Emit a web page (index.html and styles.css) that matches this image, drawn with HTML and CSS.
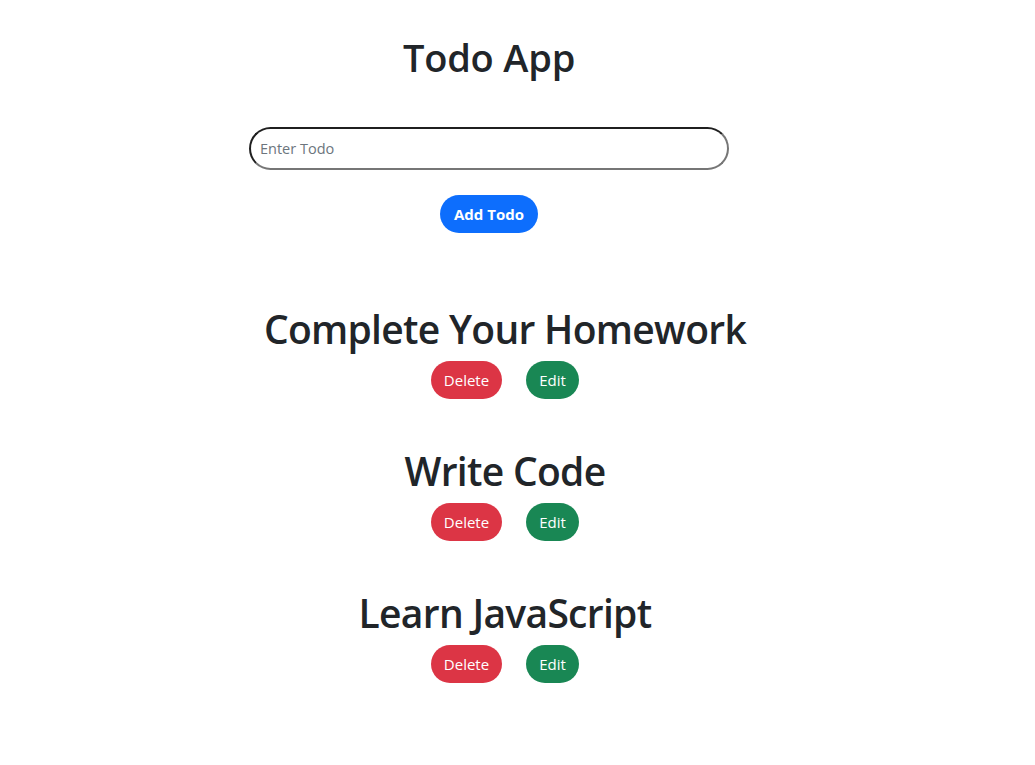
FILE: index.html
```html
<!DOCTYPE html>
<html lang="en">
<head>
<meta charset="utf-8">
<title>Todo App</title>
<link rel="stylesheet" href="styles.css">
</head>
<body>
<main class="page">
  <section class="composer">
    <h1 class="title">Todo App</h1>
    <input class="todo-input" type="text" placeholder="Enter Todo">
    <button class="btn btn-add">Add Todo</button>
  </section>
  <section class="list">
    <div class="item">
      <h2 class="item-title">Complete Your Homework</h2>
      <div class="actions">
        <button class="btn btn-delete">Delete</button>
        <button class="btn btn-edit">Edit</button>
      </div>
    </div>
    <div class="item">
      <h2 class="item-title">Write Code</h2>
      <div class="actions">
        <button class="btn btn-delete">Delete</button>
        <button class="btn btn-edit">Edit</button>
      </div>
    </div>
    <div class="item">
      <h2 class="item-title">Learn JavaScript</h2>
      <div class="actions">
        <button class="btn btn-delete">Delete</button>
        <button class="btn btn-edit">Edit</button>
      </div>
    </div>
  </section>
</main>
</body>
</html>
```
FILE: styles.css
```css
html, body {
  margin: 0;
  padding: 0;
  background: #fff;
}
body {
  font-family: "Open Sans", "Noto Sans", sans-serif;
  color: #212529;
}
.page {
  display: flex;
  flex-direction: column;
}
.composer {
  width: 978px;
  display: flex;
  flex-direction: column;
  align-items: center;
  padding-top: 33px;
}
.title {
  margin: 0;
  font-size: 38px;
  font-weight: 600;
  line-height: 48px;
  letter-spacing: -0.2px;
}
.todo-input {
  margin-top: 46px;
  width: 480px;
  height: 43px;
  box-sizing: border-box;
  border-radius: 22px;
  border-width: 2px;
  border-style: solid;
  border-color: #1f1f1f #767676 #767676 #1f1f1f;
  padding: 0 9px;
  font-family: inherit;
  font-size: 14.5px;
  color: #212529;
  outline: none;
}
.todo-input::placeholder {
  color: #6c757d;
}
.btn {
  border: none;
  border-radius: 19px;
  height: 38px;
  font-family: inherit;
  font-size: 15px;
  color: #fff;
  cursor: pointer;
  padding: 0;
}
.btn-add {
  margin-top: 25px;
  background: #0d6efd;
  font-weight: 700;
  width: 98px;
}
.list {
  width: 1010px;
  display: flex;
  flex-direction: column;
  align-items: center;
  padding-top: 70px;
  gap: 46px;
}
.item {
  display: flex;
  flex-direction: column;
  align-items: center;
}
.item-title {
  margin: 0;
  font-size: 39px;
  font-weight: 600;
  line-height: 52px;
  letter-spacing: -0.7px;
}
.actions {
  display: flex;
  gap: 24px;
  margin-top: 6px;
}
.btn-delete {
  background: #dc3545;
  width: 71px;
}
.btn-edit {
  background: #198754;
  width: 53px;
}
```
